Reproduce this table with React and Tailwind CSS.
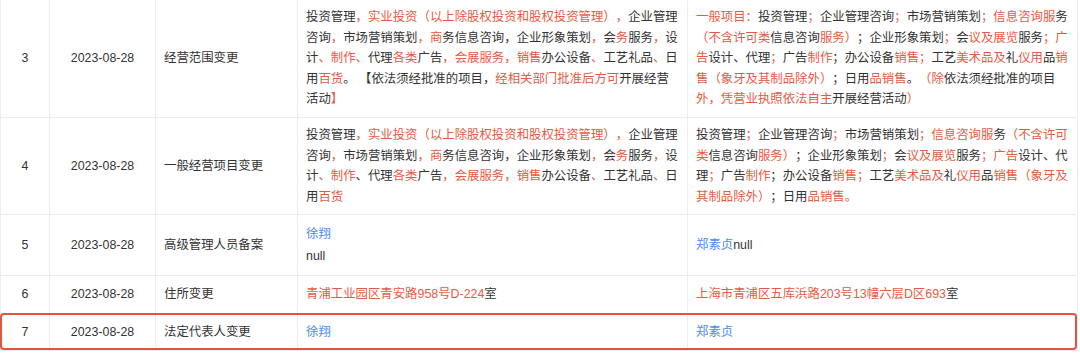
const R = ({ children }) => <span className="text-[#e65a44]">{children}</span>;
const B = ({ children }) => <span className="text-[#4a8df2]">{children}</span>;

// segments: plain string = dark text, ['r', text] = highlighted change
const renderSegs = (segs) =>
    segs.map((s, i) => (typeof s === 'string' ? <span key={i}>{s}</span> : <R key={i}>{s[1]}</R>));

const scopeOld3 = [
    '投资管理', ['r', '，实业投资（以上除股权投资和股权投资管理），'], '企业管理咨询', ['r', '，'], '市场营销策划',
    ['r', '，商'], '务信息咨询，企业形象策划', ['r', '，'], '会', ['r', '务'], '服务', ['r', '，'], '设计',
    ['r', '、制作、'], '代理', ['r', '各类'], '广告', ['r', '，会展服务，销售'], '办公设备', ['r', '、'], '工艺礼品',
    ['r', '、'], '日用', ['r', '百货'], '。 【依法须经批准的项目，', ['r', '经相关部门批准后方可'], '开展经营活动', ['r', '】'],
];

const scopeNew3 = [
    ['r', '一般项目：'], '投资管理', ['r', '；'], '企业管理咨询', ['r', '；'], '市场营销策划', ['r', '；信息咨询服'], '务',
    ['r', '（不含许可类'], '信息咨询', ['r', '服务）'], '；企业形象策划', ['r', '；'], '会', ['r', '议及展览'], '服务',
    ['r', '；广告'], '设计、代理', ['r', '；'], '广告', ['r', '制作'], '；办公设备', ['r', '销售；'], '工艺', ['r', '美术品及'],
    '礼', ['r', '仪用'], '品', ['r', '销售（象牙及其制品除外）'], '；日用', ['r', '品销售'], '。', ['r', '（除'],
    '依法须经批准的项目', ['r', '外，凭营业执照依法自主'], '开展经营活动', ['r', '）'],
];

const scopeOld4 = [
    '投资管理', ['r', '，实业投资（以上除股权投资和股权投资管理），'], '企业管理咨询', ['r', '，'], '市场营销策划',
    ['r', '，商'], '务信息咨询，企业形象策划', ['r', '，'], '会', ['r', '务'], '服务', ['r', '，'], '设计',
    ['r', '、制作'], '、代理', ['r', '各类'], '广告', ['r', '，会展服务，销售'], '办公设备', ['r', '、'], '工艺礼品',
    ['r', '、'], '日用', ['r', '百货'],
];

const scopeNew4 = [
    '投资管理', ['r', '；'], '企业管理咨询', ['r', '；'], '市场营销策划', ['r', '；信息咨询服'], '务',
    ['r', '（不含许可类'], '信息咨询', ['r', '服务）'], '；企业形象策划', ['r', '；'], '会', ['r', '议及展览'], '服务',
    ['r', '；广告'], '设计、代理', ['r', '；'], '广告', ['r', '制作'], '；办公设备', ['r', '销售；'], '工艺', ['r', '美术品及'],
    '礼', ['r', '仪用'], '品', ['r', '销售（象牙及其制品除外）'], '；日用', ['r', '品销售。'],
];

const rows = [
    { no: 3, h: 'h-[118px]', item: '经营范围变更', before: renderSegs(scopeOld3), after: renderSegs(scopeNew3) },
    { no: 4, h: 'h-[97px]', item: '一般经营项目变更', before: renderSegs(scopeOld4), after: renderSegs(scopeNew4) },
    {
        no: 5,
        h: 'h-[61px]',
        item: '高级管理人员备案',
        before: (
            <div className="leading-[22px]">
                <div><B>徐翔</B></div>
                <div>null</div>
            </div>
        ),
        after: <><B>郑素贞</B>null</>,
    },
    {
        no: 6,
        h: 'h-[38px]',
        item: '住所变更',
        before: <><R>青浦工业园区青安路958号D-224</R>室</>,
        after: <><R>上海市青浦区五库浜路203号13幢六层D区693</R>室</>,
    },
    { no: 7, h: 'h-[37px]', item: '法定代表人变更', before: <B>徐翔</B>, after: <B>郑素贞</B>, marked: true },
];

const cell = 'flex items-center border-r border-[#e8edf5]';

const App = () => {
    return (
        <div className="w-[1080px] h-[353px] bg-white overflow-hidden text-[#333] text-[12.4px] leading-[20.5px] [text-spacing-trim:space-all] [font-family:'Liberation_Sans','Noto_Sans_CJK_SC',sans-serif]">
            <div className="w-[1077px] border-l border-[#e8edf5]">
                {rows.map((row) => (
                    <div
                        key={row.no}
                        className={`relative grid grid-cols-[49px_106px_142px_390px_390px] border-b border-[#e8edf5] ${row.h}`}
                    >
                        <div className={`${cell} justify-center`}>{row.no}</div>
                        <div className={`${cell} justify-center`}>2023-08-28</div>
                        <div className={`${cell} px-2`}>{row.item}</div>
                        <div className={`${cell} px-2`}>
                            <div>{row.before}</div>
                        </div>
                        <div className={`${cell} px-2`}>
                            <div>{row.after}</div>
                        </div>

                        {/* highlight box around the legal representative row */}
                        {row.marked && (
                            <div className="absolute -top-[1px] left-[-1px] right-[0px] bottom-[0px] border-2 border-[#e5533d] rounded-[4px] pointer-events-none" />
                        )}
                    </div>
                ))}
            </div>
        </div>
    );
};

export default App;
